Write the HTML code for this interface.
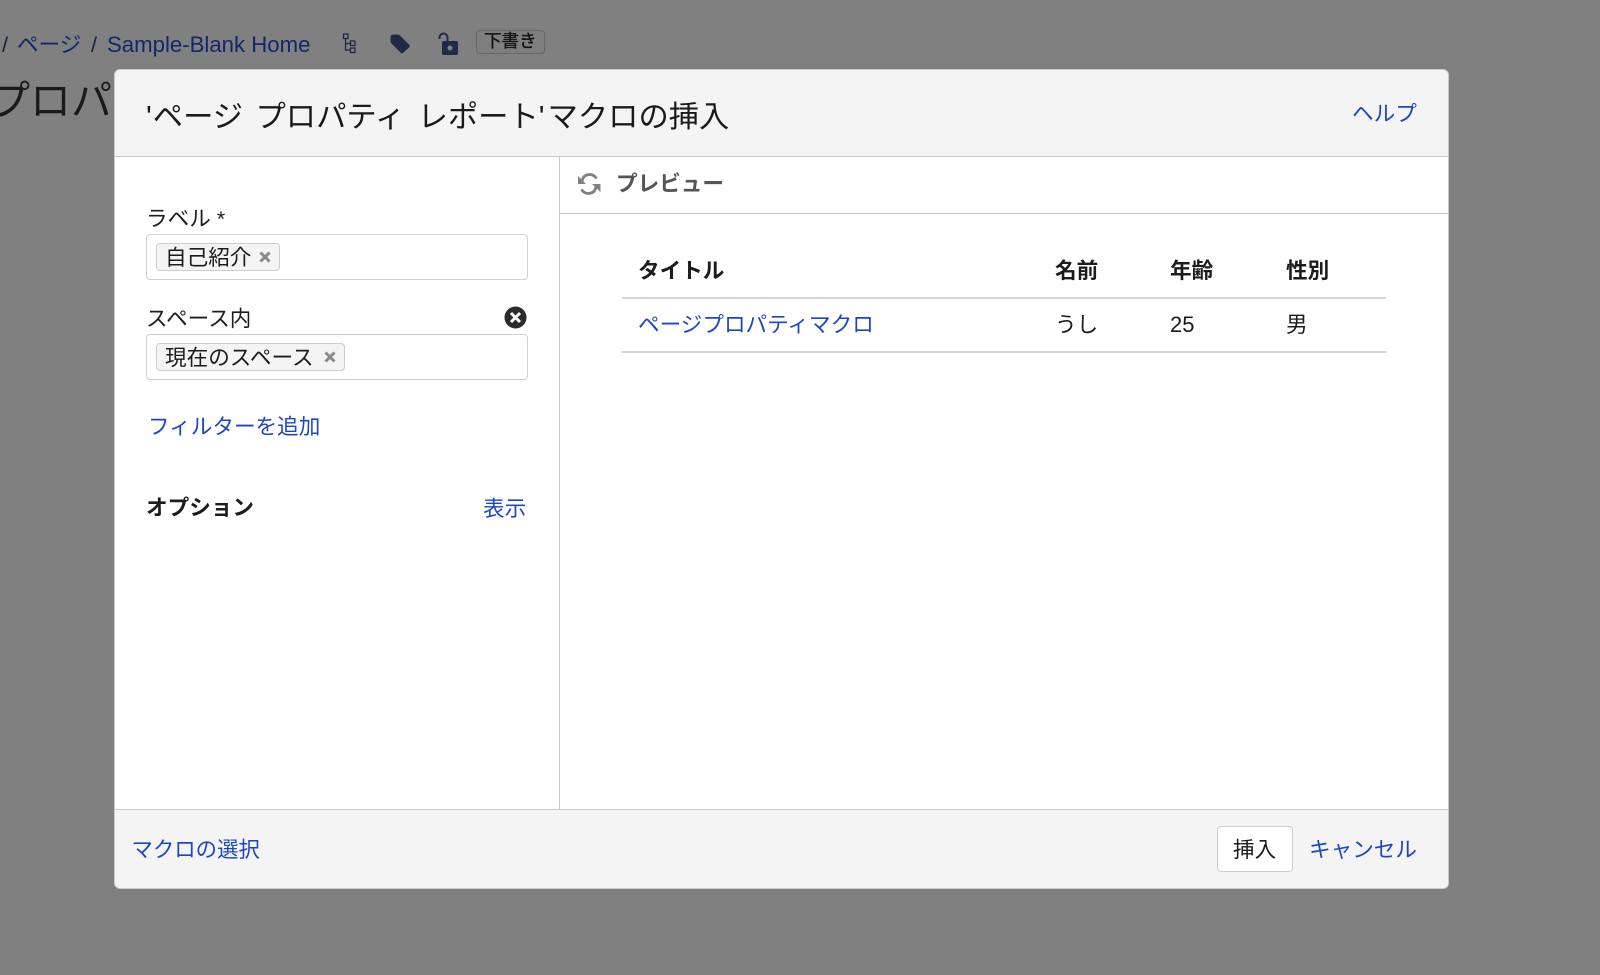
<!DOCTYPE html>
<html lang="ja">
<head>
<meta charset="utf-8">
<title>マクロの挿入</title>
<style>
html,body{margin:0;padding:0;width:1600px;height:975px;overflow:hidden;background:#808080;}
body{position:relative;font-family:"Liberation Sans","Noto Sans CJK JP",sans-serif;color:#1c1c1c;font-size:21.6px;}
.t{position:absolute;white-space:nowrap;line-height:30px;}
.a{color:#1c47c4;}
.b{font-weight:700;}
.box{position:absolute;box-sizing:border-box;}
.line{position:absolute;background:#c9c9c9;}
.input{background:#fff;border:1.5px solid #d0d0d0;border-radius:4px;left:146px;width:382px;height:46px;}
.tag{background:#f4f4f4;border:1.5px solid #cdcdcd;border-radius:4px;height:28px;}
</style>
</head>
<body>
<!-- background page -->
<div class="t" style="left:2px;top:30px;color:#14213f;">/</div>
<div class="t" style="left:17px;top:30px;color:#10286b;">ページ</div>
<div class="t" style="left:91px;top:30px;color:#14213f;">/</div>
<div class="t" style="left:107px;top:30px;color:#10286b;font-size:22.2px;">Sample-Blank Home</div>
<svg style="position:absolute;left:340px;top:30px" width="22" height="28" viewBox="0 0 22 28" fill="none" stroke="#1b2540" stroke-width="1.2">
<rect x="3.500" y="4" width="4.500" height="4.500"/><rect x="10.500" y="11" width="4.500" height="4.500"/><rect x="10.500" y="18" width="4.500" height="4.500"/><path d="M5.500 8.500V20H10.500M5.500 13.500H10.500"/>
</svg>
<svg style="position:absolute;left:388px;top:32px" width="24" height="24" viewBox="0 0 24 24">
<path d="M3 3.500Q4 2.500 6 2.500H9.500Q11 2.500 12 3.500L21 12.500Q22.500 14 21 15.500L15.500 20.500Q14 22 12.500 20.500L3.500 11.500Q2.500 10.500 2.500 9V6Q2.500 4.500 3 3.500Z" fill="#1f2a47"/>
</svg>
<svg style="position:absolute;left:436px;top:31px" width="24" height="25" viewBox="0 0 24 25">
<path d="M3.500 8V6.500A4 4 0 0 1 11.500 6.500V11" fill="none" stroke="#1f2a47" stroke-width="2"/>
<rect x="6" y="10" width="16" height="14" rx="2" fill="#1f2a47"/><circle cx="14" cy="17" r="2.500" fill="#808080"/>
</svg>
<div class="box" style="left:476px;top:30px;width:69px;height:24px;border:1.500px solid #666;border-radius:4px;background:#7e7e7e;"></div>
<div class="t" style="left:484px;top:26px;font-size:17.500px;color:#111;-webkit-text-stroke:0.35px #111;">下書き</div>
<div class="t" style="left:-11px;top:73px;font-size:41px;line-height:56px;color:#1a1a1a;">プロパ</div>

<!-- modal -->
<div class="box" style="left:114px;top:69px;width:1335px;height:820px;background:#fff;border:1.500px solid #cbcbcb;border-radius:6px;overflow:hidden;">
  <div class="box" style="left:0;top:0;width:100%;height:86px;background:#f4f4f4;"></div>
  <div class="box" style="left:0;top:740px;width:100%;height:80px;background:#f4f4f4;"></div>
</div>
<div class="line" style="left:115px;top:156px;width:1333px;height:1px;"></div>
<div class="line" style="left:559px;top:157px;width:1px;height:652px;"></div>
<div class="line" style="left:560px;top:213px;width:888px;height:1px;"></div>
<div class="line" style="left:115px;top:809px;width:1333px;height:1px;"></div>

<div class="t" style="left:146px;top:98px;font-size:30.300px;line-height:40px;color:#1a1a1a;word-spacing:4px;">'<span style="margin-left:1px"></span>ページ プロパティ レポート'<span style="margin-left:3px"></span>マクロの挿入</div>
<div class="t a" style="left:1352px;top:99px;">ヘルプ</div>

<!-- left column -->
<div class="t" style="left:146px;top:204px;">ラベル *</div>
<div class="box input" style="top:234px;"></div>
<div class="box tag" style="left:156px;top:243px;width:124px;"></div>
<div class="t" style="left:165px;top:243px;">自己紹介</div>
<svg style="position:absolute;left:258px;top:250px" width="14" height="14" viewBox="0 0 14 14"><path d="M2.500 2.500L11.500 11.500M11.500 2.500L2.500 11.500" stroke="#8a8a8a" stroke-width="3"/></svg>

<div class="t" style="left:146px;top:303.500px;">スペース内</div>
<svg style="position:absolute;left:504px;top:306px" width="23" height="23" viewBox="0 0 23 23"><circle cx="11.500" cy="11.500" r="11" fill="#2b2b2b"/><path d="M7 7L16 16M16 7L7 16" stroke="#fff" stroke-width="3"/></svg>
<div class="box input" style="top:334px;"></div>
<div class="box tag" style="left:156px;top:343px;width:189px;"></div>
<div class="t" style="left:165px;top:343px;">現在のスペース</div>
<svg style="position:absolute;left:323px;top:350px" width="14" height="14" viewBox="0 0 14 14"><path d="M2.500 2.500L11.500 11.500M11.500 2.500L2.500 11.500" stroke="#8a8a8a" stroke-width="3"/></svg>

<div class="t a" style="left:148px;top:412px;">フィルターを追加</div>
<div class="t b" style="left:146px;top:493px;">オプション</div>
<div class="t a" style="left:483px;top:493.500px;">表示</div>

<!-- preview -->
<svg style="position:absolute;left:576px;top:171px" width="26" height="26" viewBox="0 0 26 26" fill="none" stroke="#808080" stroke-width="2.800">
<path d="M6 11Q6.500 4 13.500 3.500Q18 3.500 20.500 7.500"/><path d="M20 15Q19.500 22 12.500 22.500Q8 22.500 5.500 18.500"/>
<path d="M2 5V13H10Z" fill="#808080" stroke="none"/><path d="M24.500 21V13H16Z" fill="#808080" stroke="none"/>
</svg>
<div class="t b" style="left:616px;top:169px;color:#555;">プレビュー</div>

<div class="t b" style="left:638px;top:256px;">タイトル</div>
<div class="t b" style="left:1055px;top:256px;">名前</div>
<div class="t b" style="left:1170px;top:256px;">年齢</div>
<div class="t b" style="left:1286px;top:256px;">性別</div>
<div class="line" style="left:622px;top:297px;width:764px;height:2px;background:#d4d4d4;"></div>
<div class="t a" style="left:638px;top:310px;">ページプロパティマクロ</div>
<div class="t" style="left:1055px;top:310px;">うし</div>
<div class="t" style="left:1170px;top:310px;font-size:22px;">25</div>
<div class="t" style="left:1286px;top:310px;">男</div>
<div class="line" style="left:622px;top:351px;width:764px;height:2px;background:#d4d4d4;"></div>

<!-- footer -->
<div class="t a" style="left:131.500px;top:835px;font-size:21.400px;">マクロの選択</div>
<div class="box" style="left:1217px;top:826px;width:76px;height:46px;background:#fff;border:1.500px solid #cfcfcf;border-radius:4px;"></div>
<div class="t" style="left:1233px;top:835px;">挿入</div>
<div class="t a" style="left:1309px;top:835px;">キャンセル</div>
</body>
</html>
